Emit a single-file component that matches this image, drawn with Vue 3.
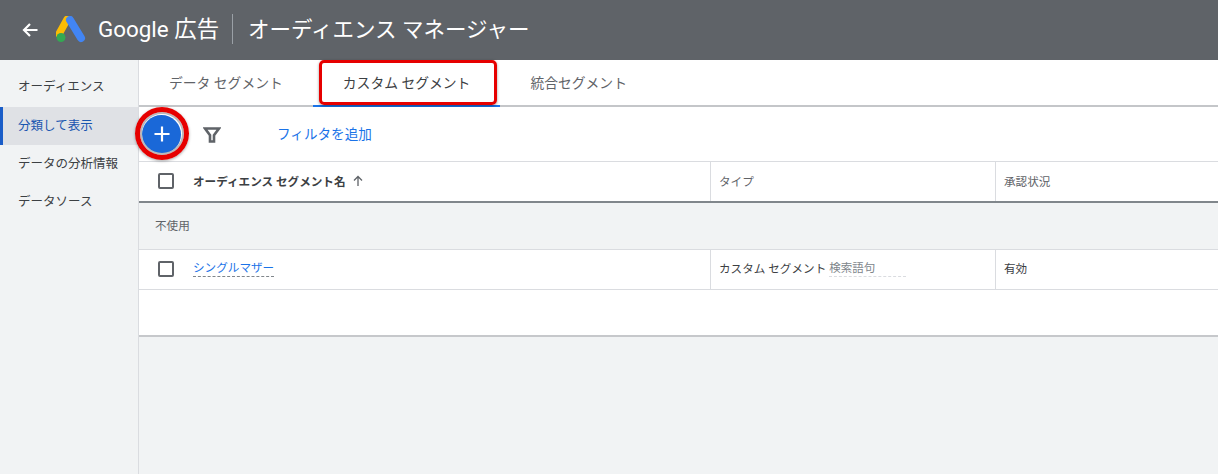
<script setup>
const navItems = [
  { label: "オーディエンス" },
  { label: "分類して表示", active: true },
  { label: "データの分析情報" },
  { label: "データソース" },
];
const tabs = [
  { label: "データ セグメント" },
  { label: "カスタム セグメント", active: true },
  { label: "統合セグメント" },
];
</script>

<template>
  <div class="page">
    <header class="topbar">
      <svg class="back" viewBox="0 0 16 16" width="16" height="16">
        <path d="M15.500 8H2.500M8 2L2 8l6 6" fill="none" stroke="#fff" stroke-width="2.200" />
      </svg>
      <svg class="logo" viewBox="0 0 30 27" width="30" height="27">
        <path d="M11 3.500 3 18" stroke="#fbbc04" stroke-width="7.400" stroke-linecap="round" />
        <path d="M14 4 25 22" stroke="#4285f4" stroke-width="8" stroke-linecap="round" />
        <circle cx="5" cy="21.500" r="4.500" fill="#34a853" />
      </svg>
      <span class="brand">Google 広告</span>
      <span class="divider"></span>
      <span class="title">オーディエンス マネージャー</span>
    </header>

    <div class="body">
      <nav class="sidebar">
        <div v-for="item in navItems" :key="item.label" class="nav-item" :class="{ active: item.active }">
          {{ item.label }}
        </div>
      </nav>

      <main class="content">
        <div class="tabs">
          <div v-for="tab in tabs" :key="tab.label" class="tab" :class="{ active: tab.active }">
            {{ tab.label }}
          </div>
          <div class="mark-rect"></div>
        </div>

        <div class="toolbar">
          <button class="fab">
            <svg viewBox="0 0 18 18" width="18" height="18">
              <path d="M9 1.500v15M1.500 9h15" stroke="#fff" stroke-width="2.200" />
            </svg>
          </button>
          <div class="mark-ring"></div>
          <svg class="filter" viewBox="0 0 18 18" width="18" height="18">
            <path d="M2 2.500h14l-5 6.800V15.500H7V9.300z" fill="none" stroke="#5f6368" stroke-width="2.600" />
          </svg>
          <a class="add-filter">フィルタを追加</a>
        </div>

        <div class="table">
          <div class="row head">
            <div class="cell name">
              <span class="check"></span>
              <strong>オーディエンス セグメント名</strong>
              <svg viewBox="0 0 12 12" width="12" height="12">
                <path d="M6 11V2M2 5.500l4-4 4 4" fill="none" stroke="#5f6368" stroke-width="1.300" />
              </svg>
            </div>
            <div class="cell type">タイプ</div>
            <div class="cell status">承認状況</div>
          </div>
          <div class="group">不使用</div>
          <div class="row item">
            <div class="cell name">
              <span class="check"></span>
              <a class="link">シングルマザー</a>
            </div>
            <div class="cell type">
              <span>カスタム セグメント</span>
              <span class="sub">検索語句</span>
            </div>
            <div class="cell status">有効</div>
          </div>
          <div class="empty"></div>
        </div>
      </main>
    </div>
  </div>
</template>

<style>
html,
body {
  margin: 0;
  background: #f1f3f4;
}
</style>

<style scoped>
.page {
  width: 1218px;
  height: 474px;
  overflow: hidden;
  display: flex;
  flex-direction: column;
  font-family: Roboto, "Noto Sans CJK JP", sans-serif;
  color: #3c4043;
}

.topbar {
  height: 60px;
  flex: none;
  background: #5f6368;
  display: flex;
  align-items: center;
  padding-left: 22px;
  color: #fff;
  box-sizing: border-box;
}
.back {
  margin-right: 18px;
}
.logo {
  margin-right: 12px;
  margin-bottom: 2px;
}
.brand {
  font-size: 22.400px;
  white-space: nowrap;
  margin-bottom: 6px;
}
.divider {
  width: 1px;
  height: 30px;
  background: #9aa0a6;
  margin: 0 15px 2px 13px;
}
.title {
  font-size: 21.500px;
  white-space: nowrap;
  margin-bottom: 6px;
}

.body {
  flex: 1;
  display: flex;
  min-height: 0;
}
.sidebar {
  width: 138px;
  flex: none;
  padding-top: 8px;
  border-right: 1px solid #dadce0;
  background: #f1f3f4;
}
.nav-item {
  height: 38px;
  line-height: 38px;
  padding-left: 18px;
  font-size: 12.500px;
  white-space: nowrap;
  box-sizing: border-box;
}
.nav-item:first-child {
  height: 39px;
}
.nav-item.active {
  background: #dfe1e5;
  border-left: 3px solid #1a5dc8;
  padding-left: 15px;
  color: #1a56b0;
}

.content {
  flex: 1;
  min-width: 0;
}
.tabs {
  position: relative;
  height: 47px;
  display: flex;
  background: #fff;
  border-bottom: 2px solid #c4c6c9;
  box-sizing: border-box;
}
.tab {
  height: 47px;
  line-height: 46px;
  padding: 0 30px;
  font-size: 13.800px;
  color: #5f6368;
  white-space: nowrap;
  box-sizing: border-box;
}
.tab.active {
  color: #3c4043;
  border-bottom: 2px solid #1a73e8;
}
.mark-rect {
  position: absolute;
  left: 180px;
  top: 0;
  width: 178px;
  height: 45px;
  border: 3px solid #e60000;
  border-radius: 5px;
  box-sizing: border-box;
  box-shadow: 0 1px 3px rgba(0, 0, 0, 0.4);
}

.toolbar {
  position: relative;
  height: 54px;
  display: flex;
  align-items: center;
  padding-left: 3px;
  background: #fff;
  box-sizing: border-box;
}
.fab {
  width: 39px;
  height: 39px;
  padding: 0;
  border: none;
  border-radius: 50%;
  background: #1a68d8;
  display: flex;
  align-items: center;
  justify-content: center;
}
.mark-ring {
  position: absolute;
  left: -4px;
  top: 0;
  width: 54px;
  height: 53px;
  border: 5px solid #e60000;
  border-radius: 50%;
  box-sizing: border-box;
  box-shadow: inset 0 0 0 2px #b9babc, 0 1px 3px rgba(0, 0, 0, 0.35);
}
.filter {
  margin-left: 22px;
  margin-top: 1px;
}
.add-filter {
  margin-left: 56px;
  margin-bottom: 2px;
  font-size: 13.600px;
  color: #1a73e8;
  white-space: nowrap;
}

.table {
  border-top: 1px solid #dadce0;
  background: #fff;
  border-bottom: 2px solid #c6c8cb;
  font-size: 11.600px;
}
.row {
  display: flex;
  box-sizing: border-box;
}
.row.head {
  height: 41px;
  border-bottom: 2px solid #80868b;
}
.row.item {
  height: 40px;
  border-bottom: 1px solid #dadce0;
}
.cell {
  display: flex;
  align-items: center;
  box-sizing: border-box;
  white-space: nowrap;
}
.cell.name {
  width: 572px;
  padding-left: 19px;
  border-right: 1px solid #dadce0;
}
.cell.type {
  width: 285px;
  padding-left: 8px;
  border-right: 1px solid #dadce0;
}
.cell.status {
  flex: 1;
  padding-left: 8px;
}
.head .cell {
  color: #5f6368;
  padding-bottom: 2px;
}
.check {
  width: 12px;
  height: 12px;
  border: 2px solid #5f6368;
  border-radius: 2px;
  margin-right: 19px;
  flex: none;
}
.item .check {
  margin-top: 2px;
}
strong {
  font-weight: 700;
  color: #3c4043;
  margin-right: 6px;
}
.item .cell {
  padding-bottom: 3px;
}
.link {
  color: #1a73e8;
  border-bottom: 1px dashed #80868b;
  line-height: 16px;
}
.sub {
  margin-left: 3px;
  padding-right: 31px;
  font-size: 11.500px;
  color: #80868b;
  line-height: 16px;
  border-bottom: 1px dashed #dadce0;
}
.group {
  height: 47px;
  line-height: 46px;
  padding-left: 16px;
  background: #f1f3f4;
  border-bottom: 1px solid #dadce0;
  box-sizing: border-box;
  color: #5f6368;
}
.empty {
  height: 45px;
}
</style>
